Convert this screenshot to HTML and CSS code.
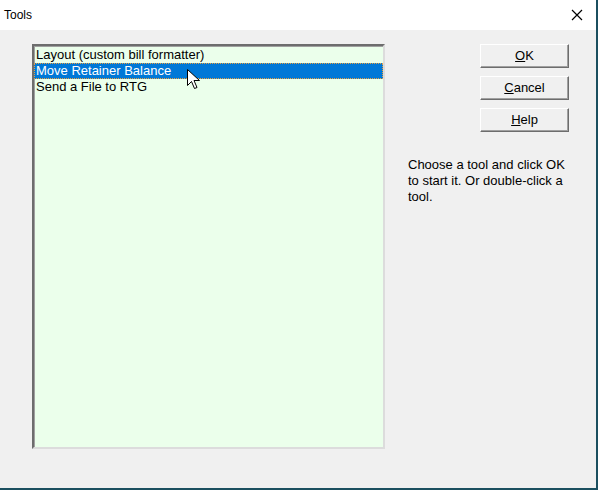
FILE: index.html
```html
<!doctype html>
<html lang="en">
<head>
	<meta charset="UTF-8">
	<title>Tools</title>
	<link rel="stylesheet" href="styles.css">
</head>
<body>
	<div class="window">
		<div class="titlebar">
			<span class="title">Tools</span>
			<span class="close">
				<svg width="12" height="12" viewBox="0 0 12 12"><path d="M1 1L11 11M11 1L1 11" stroke="#000" stroke-width="1.2" fill="none"/></svg>
			</span>
		</div>
		<div class="content">
			<div class="listbox">
				<div class="item">Layout (custom bill formatter)</div>
				<div class="item selected">Move Retainer Balance</div>
				<div class="item">Send a File to RTG</div>
				<svg class="cursor" width="14" height="22" viewBox="0 0 14 22"><path d="M0.5 0.5L0.5 16.5L4.5 12.5L7.5 19.5L10 18.5L7 11.5L12.5 11.5Z" fill="#fff" stroke="#000" stroke-width="1"/></svg>
			</div>
			<div class="side">
				<div class="buttons">
					<div class="btn"><u>O</u>K</div>
					<div class="btn"><u>C</u>ancel</div>
					<div class="btn"><u>H</u>elp</div>
				</div>
				<p class="hint">Choose a tool and click OK to start it. Or double-click a tool.</p>
			</div>
		</div>
	</div>
</body>
</html>
```

FILE: styles.css
```css
body,html{margin: 0;padding: 0;}
body{font-family: "Liberation Sans", Arial, sans-serif;font-size: 13px;color: #000;}
.window{width: 596px;height: 488px;background: #f0f0f0;border-right: 2px solid #1b4f5f;border-bottom: 2px solid #1b4f5f;display: flex;flex-direction: column;}
.titlebar{height: 29px;background: #fff;display: flex;align-items: center;justify-content: space-between;padding: 0 13px 1px 4px;}
.title{font-size: 12px;}
.close svg{display: block;}
.content{display: flex;padding: 14px 0 0 32px;}
.listbox{position: relative;width: 349px;height: 400px;background: #ebffeb;border-top: 2px solid #6d6d6d;border-left: 2px solid #6d6d6d;border-right: 2px solid #dcdcdc;border-bottom: 2px solid #dcdcdc;box-shadow: inset 1px 1px 0 #a0a0a0;padding-top: 1px;}
.item{height: 16px;line-height: 16px;padding-left: 2px;white-space: nowrap;}
.selected{background: #0078d7;color: #fff;outline: 1px dotted #e8a040;outline-offset: -1px;}
.cursor{position: absolute;left: 153px;top: 23px;}
.side{display: flex;flex-direction: column;margin-left: 23px;}
.buttons{display: flex;flex-direction: column;gap: 8px;margin-left: 72px;}
.btn{width: 87px;height: 22px;line-height: 22px;text-align: center;background: #f0f0f0;border-top: 1px solid #fff;border-left: 1px solid #fff;border-right: 1px solid #6d6d6d;border-bottom: 1px solid #6d6d6d;box-shadow: inset -1px -1px 0 #a0a0a0;}
.hint{width: 168px;margin: 25px 0 0 0;line-height: 16px;}
```
